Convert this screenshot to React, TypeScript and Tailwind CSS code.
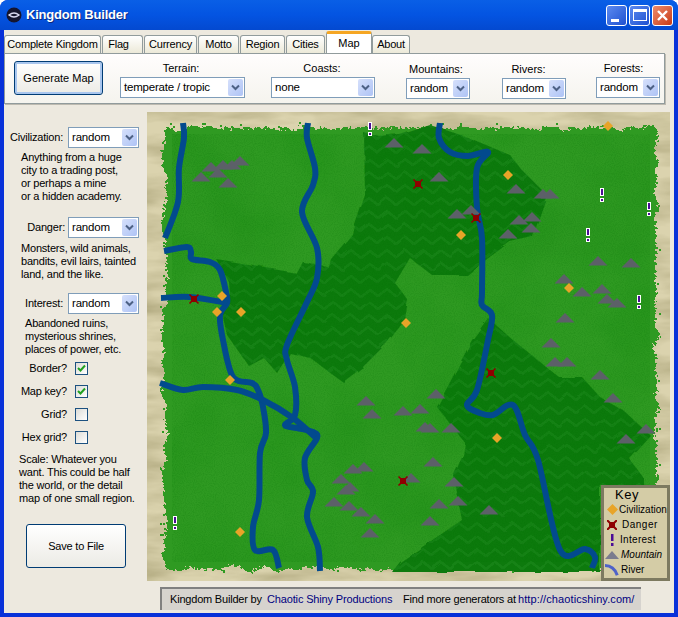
const Font = '[font-family:"Liberation_Sans",Arial,sans-serif]'

function XpSelect({ value, width }: { value: string; width: string }) {
  return (
    <div className={`flex h-[21px] ${width} items-center border border-[#7f9db9] bg-white p-px`}>
      <span className="flex-1 truncate pl-[2px] text-[11.5px] leading-none tracking-[-0.2px] text-black">{value}</span>
      <span className="flex h-[17px] w-[15px] items-center justify-center rounded-[2px] bg-gradient-to-br from-[#d6e0fb] to-[#aec3f5]">
        <svg width="9" height="7" viewBox="0 0 9 7">
          <path d="M1 1.5 L4.5 5 L8 1.5" fill="none" stroke="#4d6185" strokeWidth="2" />
        </svg>
      </span>
    </div>
  )
}

function LabeledSelect({ label, value, width, labelClass = "", top = 0 }: { label: string; value: string; width: string; labelClass?: string; top?: number }) {
  return (
    <div className={`flex flex-col items-center ${top ? "mt-px" : ""}`}>
      <span className={`h-[16px] text-[11px] leading-[14px] ${labelClass}`}>{label}</span>
      <XpSelect value={value} width={width} />
    </div>
  )
}

function Check({ label, checked, className }: { label: string; checked?: boolean; className: string }) {
  return (
    <div className={`flex h-[13px] items-center justify-end ${className}`}>
      <span className="mr-[8px] text-[11px]">{label}</span>
      <span className="flex h-[13px] w-[13px] items-center justify-center border border-[#1c5180] bg-gradient-to-br from-[#dcdcd7] to-white">
        {checked && (
          <svg width="9" height="9" viewBox="0 0 9 9">
            <path d="M1 4 L3.5 6.5 L8 1.5" fill="none" stroke="#21a121" strokeWidth="2" />
          </svg>
        )}
      </span>
    </div>
  )
}

function Mountain({ x, y }: { x: number; y: number }) {
  return <path d={`M${x} ${y} l9.5 9.5 h-19 z`} fill="#5c6068" />
}

function Gem({ x, y }: { x: number; y: number }) {
  return <path d={`M${x} ${y - 5} l5 5 l-5 5 l-5 -5 z`} fill="#e8a428" />
}

function Danger({ x, y }: { x: number; y: number }) {
  return (
    <g>
      <rect x={x - 3} y={y - 3} width="6" height="6" fill="#8f0000" />
      <path d={`M${x - 4.5} ${y - 4.5} L${x + 4.5} ${y + 4.5} M${x + 4.5} ${y - 4.5} L${x - 4.5} ${y + 4.5}`} stroke="#8f0000" strokeWidth="1.6" />
    </g>
  )
}

function Interest({ x, y }: { x: number; y: number }) {
  return (
    <g>
      <rect x={x - 2} y={y} width="4" height="8" fill="#fff" />
      <rect x={x - 1} y={y + 1} width="2" height="6" fill="#4b0d96" />
      <rect x={x - 2} y={y + 10} width="4" height="4" fill="#fff" />
      <rect x={x - 1} y={y + 11} width="2" height="2" fill="#4b0d96" />
    </g>
  )
}

const mountains = [
  [211, 162], [223, 160], [232, 160], [240, 156], [218, 168], [201, 172], [228, 178], [394, 138], [422, 144], [439, 172],
  [516, 184], [543, 189], [550, 189], [471, 205], [457, 209], [519, 215], [532, 212], [531, 223], [508, 229], [598, 256],
  [631, 258], [564, 274], [602, 284], [582, 287], [607, 294], [617, 298], [565, 313], [551, 338], [436, 389], [403, 406],
  [420, 404], [425, 422], [430, 423], [451, 423], [433, 457], [454, 477], [411, 473], [439, 499], [458, 496], [489, 505],
  [430, 516], [555, 357], [567, 357], [600, 370], [613, 393], [626, 434], [646, 424], [366, 396], [372, 409], [353, 464],
  [364, 462], [341, 474], [350, 482], [346, 485], [334, 497], [349, 501], [361, 507], [375, 514], [370, 528],
]
const gems = [
  [222, 296], [217, 312], [241, 312], [406, 323], [508, 175], [461, 235], [569, 288], [608, 126], [230, 380], [240, 532], [497, 438],
]
const dangers = [[194, 299], [418, 184], [476, 218], [491, 373], [403, 481]]
const interests = [[602, 188], [649, 202], [588, 228], [639, 295], [175, 516], [370, 122]]

const rivers: number[][][] = [
  [[183, 123], [184, 138], [179, 168], [178, 202], [165, 238]],
  [[164, 251], [187, 247], [191, 252], [192, 259], [210, 262], [220, 270], [226, 292], [227, 303], [220, 315], [223, 340], [233, 377], [252, 383], [258, 390], [263, 407], [266, 433], [260, 453], [259, 500], [253, 527], [255, 550], [273, 550], [279, 568]],
  [[161, 298], [190, 297], [227, 303]],
  [[308, 123], [307, 138], [315, 168], [313, 185], [302, 212], [317, 248], [317, 278], [307, 302], [287, 345], [287, 360], [295, 387], [295, 415], [285, 425], [297, 428], [313, 432], [317, 438], [305, 458], [307, 480], [313, 492], [307, 517], [318, 547], [320, 571]],
  [[160, 383], [183, 390], [203, 387], [237, 390], [263, 400], [293, 418], [315, 437]],
  [[440, 123], [439, 138], [450, 152], [468, 156], [488, 152], [477, 168], [477, 208], [482, 238], [482, 292], [482, 305], [492, 315], [488, 340], [477, 390], [467, 405], [480, 413], [493, 415], [513, 405], [525, 435], [538, 460], [560, 550], [585, 549], [595, 557], [592, 568]],
]

// catmull-rom through the points, good enough for river bends
function smooth(p: number[][]) {
  let d = `M${p[0][0]} ${p[0][1]}`
  for (let i = 0; i < p.length - 1; i++) {
    const a = p[Math.max(i - 1, 0)]
    const b = p[i]
    const c = p[i + 1]
    const e = p[Math.min(i + 2, p.length - 1)]
    d += ` C${b[0] + (c[0] - a[0]) / 6} ${b[1] + (c[1] - a[1]) / 6} ${c[0] - (e[0] - b[0]) / 6} ${c[1] - (e[1] - b[1]) / 6} ${c[0]} ${c[1]}`
  }
  return d
}

// speckles of grass on the parchment along the map edge
let seed = 7
const rnd = () => {
  seed = (seed * 16807) % 2147483647
  return seed / 2147483647
}
const specks = Array.from({ length: 110 }, () => {
  const side = Math.floor(rnd() * 4)
  const off = rnd() * 6
  if (side === 0) return [165 + rnd() * 490, 122 + off]
  if (side === 1) return [165 + rnd() * 490, 566 + off]
  if (side === 2) return [159 + off, 128 + rnd() * 440]
  return [654 + off, 128 + rnd() * 440]
})

const forestTop =
  "M364 133 L365 195 L355 225 L353 235 L332 260 L330 268 L320 265 L303 262 L297 273 L217 260 L229 282 L230 298 L222 313 L227 335 L248 365 L263 357 L277 373 L290 353 L310 358 L343 382 L363 367 L387 343 L405 320 L408 300 L395 283 L410 258 L432 275 L467 275 L483 262 L510 242 L533 237 L540 215 L547 195 L520 168 L510 155 L467 137 L430 125 L400 135 L380 137 Z"
const forestBottom =
  "M488 318 L472 340 L437 407 L465 443 L463 455 L453 477 L462 520 L400 562 L392 572 L600 572 L600 485 L643 485 L643 477 L629 458 L650 435 L623 410 L600 397 L583 378 L560 378 L513 340 Z"

function MapDrawing() {
  return (
    <svg width="523" height="469" viewBox="147 112 523 469" className="block">
      <defs>
        <filter id="parchment" x="0" y="0" width="1" height="1">
          <feTurbulence type="fractalNoise" baseFrequency="0.012 0.05" numOctaves="4" seed="4" />
          <feColorMatrix values="0 0 0 0 0.42  0 0 0 0 0.38  0 0 0 0 0.2  1.6 0 0 0 -0.55" />
        </filter>
        <filter id="rough" x="-5%" y="-5%" width="110%" height="110%" colorInterpolationFilters="sRGB">
          <feTurbulence type="fractalNoise" baseFrequency="0.07" numOctaves="1" seed="9" result="big" />
          <feDisplacementMap in="SourceGraphic" in2="big" scale="14" result="a" />
          <feTurbulence type="fractalNoise" baseFrequency="0.4" numOctaves="1" seed="12" result="small" />
          <feDisplacementMap in="a" in2="small" scale="8" />
        </filter>
        <filter id="grain" x="0" y="0" width="1" height="1">
          <feTurbulence type="fractalNoise" baseFrequency="0.015" numOctaves="5" seed="2" />
          <feColorMatrix values="0 0 0 0 0  0 0 0 0 0.2  0 0 0 0 0  1.4 0 0 0 -0.55" />
        </filter>
        <filter id="fine" x="0" y="0" width="1" height="1">
          <feTurbulence type="fractalNoise" baseFrequency="0.9" numOctaves="1" seed="3" />
          <feColorMatrix values="0 0 0 0 0  0 0 0 0 0.15  0 0 0 0 0  1.5 0 0 0 -0.6" />
        </filter>
        <filter id="soft" x="-5%" y="-5%" width="110%" height="110%">
          <feTurbulence type="fractalNoise" baseFrequency="0.04" numOctaves="2" seed="5" />
          <feDisplacementMap in="SourceGraphic" scale="5" />
        </filter>
        <pattern id="chevrons" width="18" height="13" patternUnits="userSpaceOnUse">
          <rect width="18" height="13" fill="#0f7a0d" />
          <path d="M0 10 L9 3 L18 10" fill="none" stroke="#158317" strokeWidth="2.5" />
        </pattern>
        <clipPath id="mapClip">
          <rect x="147" y="112" width="523" height="469" />
        </clipPath>
      </defs>
      <g clipPath="url(#mapClip)">
        <rect x="147" y="112" width="523" height="469" fill="#dbd3ae" />
        <rect x="147" y="112" width="523" height="469" filter="url(#parchment)" />
        <rect x="165" y="128" width="491" height="441" fill="#2f9a22" filter="url(#rough)" />
        {specks.map(([x, y], i) => (
          <rect key={i} x={Math.round(x)} y={Math.round(y)} width="2" height="2" fill="#2f9a22" />
        ))}
        <g filter="url(#soft)">
          <path d={forestTop} fill="url(#chevrons)" />
          <path d={forestBottom} fill="url(#chevrons)" />
        </g>
        <rect x="172" y="134" width="478" height="428" filter="url(#grain)" opacity="0.25" />
        <rect x="172" y="134" width="478" height="428" filter="url(#fine)" opacity="0.3" />
        {rivers.map((p, i) => (
          <path key={i} d={smooth(p)} fill="none" stroke="#024a8e" strokeWidth="6" strokeLinejoin="round" />
        ))}
        {mountains.map(([x, y], i) => <Mountain key={i} x={x} y={y} />)}
        {gems.map(([x, y], i) => <Gem key={i} x={x} y={y} />)}
        {dangers.map(([x, y], i) => <Danger key={i} x={x} y={y} />)}
        {interests.map(([x, y], i) => <Interest key={i} x={x} y={y} />)}
      </g>
    </svg>
  )
}

function KeyRow({ icon, label, className = "" }: { icon: React.ReactNode; label: string; className?: string }) {
  return (
    <div className="flex h-[15px] items-center">
      <span className="flex w-[14px] shrink-0 justify-center">{icon}</span>
      <span className={`whitespace-nowrap text-[10px] leading-none ${className}`}>{label}</span>
    </div>
  )
}

function MapKey() {
  return (
    <div className="absolute bottom-0 right-0 h-[96px] w-[69px] border-[3px] border-[#7d7a60] bg-[#d4cca6] pl-px text-black">
      <div className="pl-[10px] text-[13px] leading-[14px] tracking-[0.5px]">Key</div>
      <KeyRow
        label="Civilization"
        icon={<svg width="11" height="11" viewBox="0 0 10 10"><path d="M5 0 L10 5 L5 10 L0 5 Z" fill="#e8a428" /></svg>}
      />
      <KeyRow
        label="Danger"
        className="pl-[3px] tracking-[0.5px]"
        icon={<svg width="10" height="10" viewBox="0 0 10 10"><rect x="2" y="2" width="6" height="6" fill="#8f0000" /><path d="M0 0 L10 10 M10 0 L0 10" stroke="#8f0000" strokeWidth="2" /></svg>}
      />
      <KeyRow
        label="Interest"
        className="pl-[1px] tracking-[0.3px]"
        icon={<svg width="4" height="12" viewBox="0 0 4 12"><rect x="1" width="2.5" height="7" fill="#4b0d96" /><rect x="1" y="9" width="2.5" height="3" fill="#4b0d96" /></svg>}
      />
      <KeyRow
        label="Mountain"
        className="pl-[2px] italic"
        icon={<svg width="14" height="8" viewBox="0 0 14 8"><path d="M7 0 L14 8 H0 Z" fill="#7b7c8e" /></svg>}
      />
      <KeyRow
        label="River"
        className="pl-[2px]"
        icon={<svg width="16" height="13" viewBox="0 0 16 13"><path d="M0 2 Q10 2 14 13" fill="none" stroke="#4f62c8" strokeWidth="3.5" /></svg>}
      />
    </div>
  )
}

const tabs = ["Complete Kingdom", "Flag", "Currency", "Motto", "Region", "Cities", "Map", "About"]
const tabWidths = ["w-[97px]", "w-[41px] pr-[8px]", "w-[53px]", "w-[41px]", "w-[45px]", "w-[39px]", "w-[46px]", "w-[38px]"]

export default function App() {
  return (
    <div className={`flex h-[617px] w-[678px] flex-col overflow-hidden rounded-t-[8px] bg-[#0831d9] ${Font} text-black`}>
      <div className="flex h-[30px] shrink-0 items-center bg-gradient-to-b from-[#0a5fe6] via-[#0454e2] to-[#0349d0] pl-[6px] pr-[5px]">
        <svg width="16" height="16" viewBox="0 0 16 16">
          <circle cx="8" cy="8" r="7.5" fill="#15152e" />
          <path d="M3 8 Q8 4 13 8 Q8 12 3 8 Z" fill="none" stroke="#d8d8f0" strokeWidth="1.4" />
        </svg>
        <span className="ml-[4px] flex-1 text-[13px] font-bold tracking-[-0.2px] text-white [text-shadow:1px_1px_#0a2a80]">Kingdom Builder</span>
        <div className="flex gap-[2px]">
          <div className="flex h-[21px] w-[21px] items-end rounded-[3px] border border-white bg-gradient-to-br from-[#5c8af0] to-[#1f50d0] p-[3px]">
            <span className="ml-[1px] h-[3px] w-[8px] bg-white" />
          </div>
          <div className="flex h-[21px] w-[21px] items-center justify-center rounded-[3px] border border-white bg-gradient-to-br from-[#5c8af0] to-[#1f50d0]">
            <span className="h-[12px] w-[14px] border border-t-[3px] border-white" />
          </div>
          <div className="flex h-[21px] w-[21px] items-center justify-center rounded-[3px] border border-white bg-gradient-to-br from-[#ec8a6a] to-[#c8380e]">
            <svg width="13" height="13" viewBox="0 0 13 13">
              <path d="M2 2 L11 11 M11 2 L2 11" stroke="#fff" strokeWidth="2.4" />
            </svg>
          </div>
        </div>
      </div>

      <div className="mx-[4px] mb-[4px] flex flex-1 flex-col bg-[#ede9df]">
        <div className="flex h-[23px] items-end">
          {tabs.map((t, i) =>
            t === "Map" ? (
              <div key={t} className={`relative z-10 flex h-[22px] ${tabWidths[i]} items-center justify-center rounded-t-[3px] border-x border-[#919b9c] border-t-[3px] border-t-[#f5a623] bg-white text-[11px]`}>
                {t}
              </div>
            ) : (
              <div key={t} className={`mr-[1px] flex h-[18px] ${tabWidths[i]} items-center justify-center whitespace-nowrap rounded-t-[3px] border-x border-t border-[#919b9c] bg-gradient-to-b from-white to-[#ece9d8] text-[11px] tracking-[-0.2px]`}>
                {t}
              </div>
            )
          )}
        </div>

        <div className="flex h-[51px] w-[661px] items-start border border-[#919b9c] bg-gradient-to-b from-[#fffdfd] to-[#f5f4ee] pl-[9px] pt-[7px] shadow-[1px_1px_0_#bdbab0]">
          <button className="h-[34px] w-[89px] rounded-[3px] border border-[#003c74] bg-gradient-to-b from-white to-[#ecebe5] text-[11px] shadow-[inset_0_0_0_2px_#a9c6ee]">
            Generate Map
          </button>
          <div className="ml-[17px]"><LabeledSelect label="Terrain:" labelClass="pr-[3px]" value="temperate / tropic" width="w-[125px]" /></div>
          <div className="ml-[26px]"><LabeledSelect label="Coasts:" labelClass="pr-[2px]" value="none" width="w-[104px]" /></div>
          <div className="ml-[31px]"><LabeledSelect label="Mountains:" labelClass="pr-[4px]" value="random" width="w-[64px]" top={1} /></div>
          <div className="ml-[32px]"><LabeledSelect label="Rivers:" labelClass="pr-[11px]" value="random" width="w-[64px]" top={1} /></div>
          <div className="ml-[30px]"><LabeledSelect label="Forests:" labelClass="pr-[9px]" value="random" width="w-[64px]" /></div>
        </div>

        <div className="flex flex-1">
          <div className="w-[143px] shrink-0 text-[11px] leading-[13px] tracking-[-0.2px]">
            <div className="mt-[23px] flex items-center justify-end pr-[8px]">
              <span className="mr-[5px]">Civilization:</span>
              <XpSelect value="random" width="w-[71px]" />
            </div>
            <p className="ml-[17px] mt-[3px] whitespace-nowrap">Anything from a huge<br />city to a trading post,<br />or perhaps a mine<br />or a hidden academy.</p>

            <div className="mt-[14px] flex items-center justify-end pr-[8px]">
              <span className="mr-[3px]">Danger:</span>
              <XpSelect value="random" width="w-[71px]" />
            </div>
            <p className="ml-[17px] mt-[4px] whitespace-nowrap">Monsters, wild animals,<br />bandits, evil lairs, tainted<br />land, and the like.</p>

            <div className="mt-[12px] flex items-center justify-end pr-[8px]">
              <span className="mr-[5px]">Interest:</span>
              <XpSelect value="random" width="w-[71px]" />
            </div>
            <p className="ml-[21px] mt-[3px] whitespace-nowrap">Abandoned ruins,<br />mysterious shrines,<br />places of power, etc.</p>

            <Check label="Border?" checked className="mr-[59px] mt-[6px]" />
            <Check label="Map key?" checked className="mr-[59px] mt-[10px]" />
            <Check label="Grid?" className="mr-[59px] mt-[10px]" />
            <Check label="Hex grid?" className="mr-[59px] mt-[10px]" />

            <p className="ml-[15px] mt-[9px] whitespace-nowrap">Scale: Whatever you<br />want. This could be half<br />the world, or the detail<br />map of one small region.</p>

            <button className="ml-[22px] mt-[19px] h-[44px] w-[100px] rounded-[3px] border border-[#003c74] bg-gradient-to-b from-white to-[#ecebe5] text-[11px]">
              Save to File
            </button>
          </div>

          <div className="flex flex-col">
            <div className="relative mt-[8px] h-[469px] w-[523px]">
              <MapDrawing />
              <MapKey />
            </div>
            <div className="ml-[13px] mt-[6px] flex h-[23px] w-[481px] items-center whitespace-nowrap border-l-2 border-t-2 border-[#808080] bg-[#d6d3ce] pl-[8px] text-[11px]">
              <span className="w-[97px] tracking-[-0.2px]">Kingdom Builder by</span>
              <span className="w-[136px] tracking-[-0.15px] text-[#000080]">Chaotic Shiny Productions</span>
              <span className="w-[115px] tracking-[-0.2px]">Find more generators at</span>
              <span className="tracking-[0.1px] text-[#000080]">http://chaoticshiny.com/</span>
            </div>
          </div>
        </div>
      </div>
    </div>
  )
}
